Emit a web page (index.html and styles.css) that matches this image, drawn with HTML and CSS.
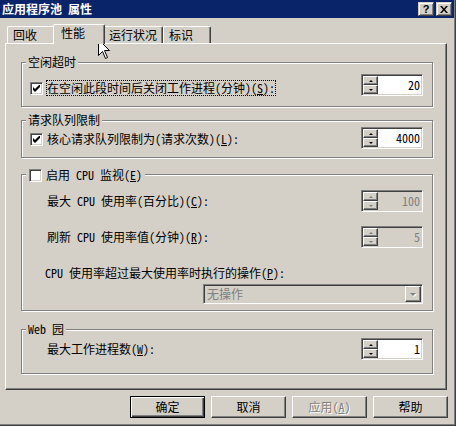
FILE: index.html
```html
<!DOCTYPE html>
<html lang="zh-CN">
<head>
    <meta charset="UTF-8">
    <title>应用程序池 属性</title>
    <link rel="stylesheet" href="styles.css">
</head>
<body>
<div class="window">
    <div class="titleBar">
        <span class="titleText">应用程序池 属性</span>
        <span class="capBtn">?</span>
        <span class="capBtn">
            <svg width="8" height="7" viewBox="0 0 8 7"><path d="M0 0h2l2 2.5 2-2.5h2l-3 3.5 3 3.5h-2l-2-2.5-2 2.5h-2l3-3.5z"/></svg>
        </span>
    </div>

    <div class="tabs">
        <div class="tab">回收</div>
        <div class="tab active">性能</div>
        <div class="tab">运行状况</div>
        <div class="tab">标识</div>
    </div>

    <div class="panel">
        <!-- idle timeout -->
        <div class="group idleGroup">
            <div class="legend">空闲超时</div>
            <div class="row checkRow">
                <label class="check">
                    <span class="box"><svg width="7" height="7" viewBox="0 0 7 7"><polygon points="0,2 2,4 7,-1 7,2 2,7 0,5"/></svg></span>
                    <span class="checkText focus">在空闲此段时间后关闭工作进程(分钟)(<u>S</u>):</span>
                </label>
                <div class="spin">
                    <div class="spinBtns"><span class="spinBtn"><i class="arrowUp"></i></span><span class="spinBtn"><i class="arrowDown"></i></span></div>
                    <span class="spinValue">20</span>
                </div>
            </div>
        </div>

        <!-- request queue -->
        <div class="group queueGroup">
            <div class="legend">请求队列限制</div>
            <div class="row checkRow">
                <label class="check">
                    <span class="box"><svg width="7" height="7" viewBox="0 0 7 7"><polygon points="0,2 2,4 7,-1 7,2 2,7 0,5"/></svg></span>
                    <span class="checkText">核心请求队列限制为(请求次数)(<u>L</u>):</span>
                </label>
                <div class="spin">
                    <div class="spinBtns"><span class="spinBtn"><i class="arrowUp"></i></span><span class="spinBtn"><i class="arrowDown"></i></span></div>
                    <span class="spinValue">4000</span>
                </div>
            </div>
        </div>

        <!-- cpu monitoring -->
        <div class="group cpuGroup">
            <div class="legend checkLegend">
                <label class="check">
                    <span class="box"></span>
                    <span class="checkText">启用 CPU 监视(<u>E</u>)</span>
                </label>
            </div>
            <div class="row rowMax">
                <span>最大 CPU 使用率(百分比)(<u>C</u>):</span>
                <div class="spin disabled">
                    <div class="spinBtns"><span class="spinBtn"><i class="arrowUp"></i></span><span class="spinBtn"><i class="arrowDown"></i></span></div>
                    <span class="spinValue">100</span>
                </div>
            </div>
            <div class="row rowRefresh">
                <span>刷新 CPU 使用率值(分钟)(<u>R</u>):</span>
                <div class="spin disabled">
                    <div class="spinBtns"><span class="spinBtn"><i class="arrowUp"></i></span><span class="spinBtn"><i class="arrowDown"></i></span></div>
                    <span class="spinValue">5</span>
                </div>
            </div>
            <div class="actionLabel">CPU 使用率超过最大使用率时执行的操作(<u>P</u>):</div>
            <div class="dropdown">
                <span class="dropText">无操作</span>
                <span class="dropBtn"><i class="arrowDrop"></i></span>
            </div>
        </div>

        <!-- web garden -->
        <div class="group webGroup">
            <div class="legend">Web 园</div>
            <div class="row rowWeb">
                <span>最大工作进程数(<u>W</u>):</span>
                <div class="spin">
                    <div class="spinBtns"><span class="spinBtn"><i class="arrowUp"></i></span><span class="spinBtn"><i class="arrowDown"></i></span></div>
                    <span class="spinValue">1</span>
                </div>
            </div>
        </div>
    </div>

    <div class="buttons">
        <div class="btn default">确定</div>
        <div class="btn">取消</div>
        <div class="btn disabled">应用(<u>A</u>)</div>
        <div class="btn">帮助</div>
    </div>

    <svg class="cursor" width="12" height="20" viewBox="0 0 12 20">
        <polygon points="0.5,0.5 0.5,16.5 4.5,12.5 7.5,19.5 9.5,18.5 6.5,11.5 11.5,11.5" fill="#fff" stroke="#000"/>
    </svg>
</div>
</body>
</html>
```

FILE: styles.css
```css
body {
    margin: 0;
    background: #d4d0c8;
}
.window {
    position: relative;
    width: 456px;
    height: 426px;
    box-sizing: border-box;
    background: #d4d0c8;
    box-shadow: inset -1px -1px #404040, inset -2px -2px #808080;
    font: 12px/14px "Noto Sans Mono CJK SC", "Noto Sans CJK SC", sans-serif;
    color: #000;
    overflow: hidden;
}

/* title bar */
.titleBar {
    display: flex;
    align-items: center;
    height: 18px;
    margin-right: 2px;
    padding: 0 2px;
    background: #0a246a;
    color: #fff;
}
.titleText {
    font-weight: bold;
    margin-right: auto;
}
.capBtn {
    display: flex;
    align-items: center;
    justify-content: center;
    box-sizing: border-box;
    width: 16px;
    height: 14px;
    margin-left: 2px;
    background: #d4d0c8;
    color: #000;
    border: 1px solid;
    border-color: #d4d0c8 #404040 #404040 #d4d0c8;
    box-shadow: inset 1px 1px #fff, inset -1px -1px #808080;
    font: bold 11px/12px "Liberation Sans", sans-serif;
}

/* tabs */
.tabs {
    display: flex;
    align-items: flex-end;
    height: 19px;
    margin-top: 6px;
    padding-left: 7px;
}
.tab {
    box-sizing: border-box;
    min-width: 48px;
    height: 17px;
    padding: 1px 5px 0 5px;
    border: 1px solid #fff;
    border-bottom: 0;
    border-right-color: #404040;
    border-radius: 2px 2px 0 0;
    box-shadow: inset -1px 0 #808080;
}
.tab.active {
    position: relative;
    z-index: 1;
    min-width: 52px;
    height: 20px;
    margin: 0 -2px -1px;
    padding-left: 7px;
    background: #d4d0c8;
}

/* property page */
.panel {
    box-sizing: border-box;
    width: 442px;
    height: 347px;
    margin-left: 5px;
    padding: 18px 13px 0 15px;
    border: 1px solid;
    border-color: #fff #404040 #404040 #fff;
    box-shadow: inset -1px -1px #808080;
}
.group {
    box-sizing: border-box;
    display: flex;
    flex-direction: column;
    border: 1px solid #808080;
    box-shadow: 1px 1px #fff, inset 1px 1px #fff;
}
.idleGroup {
    height: 45px;
}
.queueGroup {
    height: 38px;
    margin-top: 13px;
}
.cpuGroup {
    height: 137px;
    margin-top: 16px;
}
.webGroup {
    height: 45px;
    margin-top: 18px;
}
.legend {
    align-self: flex-start;
    margin: -8px 0 0 4px;
    padding: 0 2px;
    background: #d4d0c8;
    line-height: 14px;
}
.checkLegend {
    padding-left: 3px;
}

.row {
    display: flex;
    align-items: center;
    justify-content: space-between;
    padding: 0 9px 0 25px;
}
.checkRow {
    align-items: flex-start;
    padding-left: 8px;
}
.idleGroup .row {
    margin-top: 5px;
}
.idleGroup .check {
    margin-top: 6px;
}
.queueGroup .check {
    margin-top: 4px;
}
.rowMax {
    margin-top: 7px;
}
.rowRefresh {
    margin-top: 14px;
}
.rowWeb {
    margin-top: 2px;
}
.actionLabel {
    margin-top: 18px;
    padding-left: 23px;
}

/* checkbox */
.check {
    display: flex;
    align-items: center;
    gap: 3px;
}
.checkText {
    border: 1px dotted transparent;
    line-height: 14px;
}
.checkText.focus {
    border-color: #000;
}
.box {
    box-sizing: border-box;
    display: flex;
    align-items: center;
    justify-content: center;
    width: 13px;
    height: 13px;
    background: #fff;
    border: 1px solid;
    border-color: #808080 #fff #fff #808080;
    box-shadow: inset 1px 1px #404040, inset -1px -1px #d4d0c8;
}

/* spinner */
.spin {
    box-sizing: border-box;
    display: flex;
    width: 62px;
    height: 22px;
    padding: 1px;
    background: #fff;
    border: 1px solid;
    border-color: #808080 #fff #fff #808080;
    box-shadow: inset 1px 1px #404040, inset -1px -1px #d4d0c8;
}
.spin.disabled {
    background: #d4d0c8;
}
.spinBtns {
    display: flex;
    flex-direction: column;
    width: 15px;
}
.spinBtn {
    flex: 1;
    display: flex;
    align-items: center;
    justify-content: center;
    box-sizing: border-box;
    background: #d4d0c8;
    border: 1px solid;
    border-color: #fff #404040 #404040 #fff;
    box-shadow: inset -1px -1px #808080;
}
.spinValue {
    flex: 1;
    text-align: right;
    padding-right: 1px;
    line-height: 18px;
}
.spin.disabled .spinValue {
    color: #808080;
}
.arrowUp, .arrowDown {
    width: 0;
    height: 0;
    border-left: 2px solid transparent;
    border-right: 2px solid transparent;
}
.arrowUp {
    border-bottom: 2px solid #000;
}
.arrowDown {
    border-top: 2px solid #000;
}
.spin.disabled .arrowUp {
    border-bottom-color: #808080;
}
.spin.disabled .arrowDown {
    border-top-color: #808080;
}

/* combo box */
.dropdown {
    box-sizing: border-box;
    display: flex;
    align-items: center;
    width: 220px;
    height: 20px;
    margin: 4px 0 0 181px;
    padding: 1px;
    background: #d4d0c8;
    border: 1px solid;
    border-color: #808080 #fff #fff #808080;
    box-shadow: inset 1px 1px #404040, inset -1px -1px #d4d0c8;
}
.dropText {
    flex: 1;
    padding-left: 2px;
    color: #808080;
}
.dropBtn {
    box-sizing: border-box;
    display: flex;
    align-items: center;
    justify-content: center;
    width: 16px;
    height: 16px;
    border: 1px solid;
    border-color: #fff #404040 #404040 #fff;
    box-shadow: inset -1px -1px #808080;
}
.arrowDrop {
    width: 0;
    height: 0;
    border-left: 3px solid transparent;
    border-right: 3px solid transparent;
    border-top: 3px solid #808080;
    filter: drop-shadow(1px 1px 0 #fff);
}

/* dialog buttons */
.buttons {
    display: flex;
    gap: 6px;
    margin-top: 6px;
    padding-left: 130px;
}
.btn {
    box-sizing: border-box;
    display: flex;
    align-items: center;
    justify-content: center;
    width: 75px;
    height: 22px;
    border: 1px solid;
    border-color: #fff #404040 #404040 #fff;
    box-shadow: inset -1px -1px #808080;
}
.btn.default {
    border-color: #000;
    box-shadow: inset 1px 1px #fff, inset -1px -1px #404040, inset -2px -2px #808080;
}
.btn.disabled {
    color: #808080;
    text-shadow: 1px 1px #fff;
}

.cursor {
    position: absolute;
    left: 98px;
    top: 39px;
}
```
